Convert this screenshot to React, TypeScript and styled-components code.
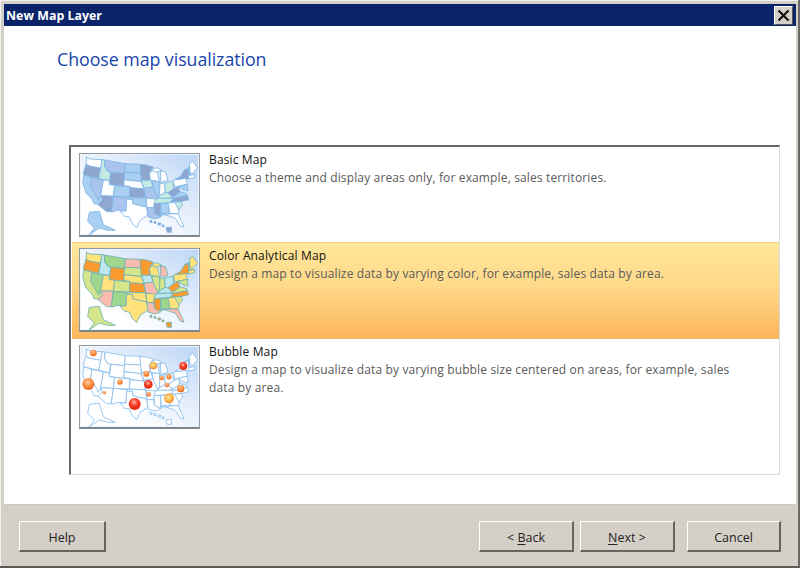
import React from "react";
import styled, { createGlobalStyle } from "styled-components";

const Global = createGlobalStyle`
  html, body { margin: 0; padding: 0; background: #d4d0c8; }
  #root { width: 800px; height: 568px; overflow: hidden; }
`;

const Win = styled.div`
  box-sizing: border-box;
  width: 800px;
  height: 568px;
  display: flex;
  flex-direction: column;
  background: #d4d0c8;
  padding: 4px 2px 0 4px;
  border-right: 2px solid #6a6a68;
  border-bottom: 2px solid #5a5a58;
  box-shadow: inset 1px 1px 0 #f4f2ee;
  font-family: "Open Sans", "Noto Sans", sans-serif;
`;

const TitleBar = styled.div`
  height: 22px;
  flex: none;
  background: #0a246a;
  display: flex;
  align-items: center;
  justify-content: space-between;
  padding: 0 3px 0 2px;
  color: #fff;
  font: bold 12.4px "Open Sans", sans-serif;
`;

const CloseBtn = styled.div`
  box-sizing: border-box;
  width: 19px;
  height: 19px;
  background: #d4d0c8;
  border: 1px solid;
  border-color: #fff #555 #555 #fff;
  display: flex;
  align-items: center;
  justify-content: center;
`;

const Body = styled.div`
  height: 478px;
  flex: none;
  background: #fff;
  box-sizing: border-box;
  padding: 21px 16px 0 53px;
`;

const Heading = styled.div`
  color: #1a45ad;
  font-family: "Open Sans", sans-serif;
  font-size: 17.8px;
  line-height: 24px;
  height: 24px;
  letter-spacing: -0.05px;
  margin-bottom: 74px;
`;

const ListBox = styled.div`
  box-sizing: border-box;
  width: 711px;
  height: 330px;
  margin-left: 12px;
  border-style: solid;
  border-width: 2px 1px 1px 2px;
  border-color: #666 #dcdad4 #dcdad4 #666;
  background: #fff;
  display: flex;
  flex-direction: column;
`;

const Row = styled.div<{ $selected?: boolean; $h: number }>`
  box-sizing: border-box;
  height: ${(p) => p.$h}px;
  flex: none;
  display: flex;
  align-items: flex-start;
  gap: 9px;
  padding: 6px 8px 0 8px;
  ${(p) =>
    p.$selected
      ? `background: linear-gradient(#ffe79a, #ffd98a 45%, #fdb65c);
         border-top: 1px solid #f5c67e;
         border-bottom: 1px solid #f5b868;
         margin-left: 1px;
         padding-left: 7px;
         padding-top: 5px;`
      : ""}
`;

const Thumb = styled.div`
  box-sizing: border-box;
  width: 121px;
  height: 84px;
  flex: none;
  border: 1px solid #8f9aa6;
  border-bottom: 2px solid #7d8792;
  background: linear-gradient(35deg, #ffffff 25%, #e4eefc 60%, #bcd5f6);
  box-shadow: inset 0 0 0 1px #eef3fa;
  svg { display: block; width: 100%; height: 100%; }
`;

const RowText = styled.div<{ $selected?: boolean }>`
  flex: 1;
  font-size: 12px;
  line-height: 18px;
  letter-spacing: 0.14px;
  margin-top: ${(p) => (p.$selected ? "-1px" : "-2px")};
`;

const RowTitle = styled.div`
  color: #111;
`;

const RowDesc = styled.div`
  color: #5a5a5a;
  width: 530px;
`;

const Footer = styled.div`
  flex: 1;
  display: flex;
  align-items: flex-start;
  padding: 16px 15px 0 15px;
  box-sizing: border-box;
  border-top: 1px solid #c9c6be;
`;

const Btn = styled.div<{ $w: number; $ml?: number }>`
  box-sizing: border-box;
  width: ${(p) => p.$w}px;
  height: 31px;
  margin-left: ${(p) => p.$ml ?? 0}px;
  padding-top: 2px;
  background: #d4d0c8;
  border-style: solid;
  border-width: 1px 2px 2px 1px;
  border-color: #fff #66645f #66645f #fff;
  display: flex;
  align-items: center;
  justify-content: center;
  font: 12.5px "Open Sans", sans-serif;
  color: #222;
  u { text-underline-offset: 2px; }
`;

const Spacer = styled.div`
  flex: 1;
`;

type Fill = Record<string, string>;

const STATES: Record<string, string> = {
  WA: "62,42 72,48 108,50 104,76 72,70 60,64",
  OR: "60,64 72,70 104,76 98,106 54,96 52,90",
  CA: "54,96 78,103 74,130 110,170 104,184 84,182 78,168 60,150 50,118",
  NV: "78,103 112,111 104,158 98,172 74,130",
  ID: "108,50 116,51 116,70 124,84 134,88 130,113 98,106 104,76",
  MT: "116,51 178,62 176,92 135,88 124,84 116,70",
  WY: "135,88 176,92 174,130 130,125",
  UT: "112,111 130,113 130,125 146,127 142,160 104,158",
  AZ: "104,158 142,160 136,206 122,206 96,185 110,170",
  CO: "146,127 192,132 190,162 142,160",
  NM: "142,160 182,164 180,204 150,202 146,206 136,206",
  ND: "178,62 222,64 226,90 176,88",
  SD: "176,88 226,90 226,116 174,110",
  NE: "174,110 226,116 234,138 192,134 192,130 174,128",
  KS: "192,134 234,138 238,164 190,162",
  OK: "182,164 238,164 242,192 214,186 200,182 200,170 182,168",
  TX: "182,168 200,170 200,182 214,186 242,192 246,216 222,232 212,254 198,240 190,222 176,220 162,204 180,204",
  MN: "222,64 240,66 262,72 250,90 252,112 226,112",
  IA: "226,112 254,112 262,132 234,136",
  MO: "234,136 262,132 276,164 270,170 240,166",
  AR: "240,166 270,168 262,194 243,194",
  LA: "243,194 262,194 266,210 284,222 268,228 246,222",
  WI: "250,90 262,82 276,92 280,116 254,112",
  IL: "258,114 280,116 284,148 276,164 262,136",
  IN: "282,122 296,120 298,148 280,158",
  MI: "284,84 298,86 306,112 284,118",
  UP: "256,80 272,74 288,82 270,88",
  OH: "296,120 322,114 322,138 306,150 298,148",
  KY: "276,166 280,158 298,148 306,150 314,158 322,162 312,166",
  WV: "322,138 336,130 342,146 322,162 314,158 306,150",
  VA: "312,166 322,162 342,146 362,152 364,158 324,166",
  TN: "268,170 276,166 312,166 324,166 312,178 264,182",
  NC: "312,178 324,166 364,158 368,170 344,176 314,178",
  SC: "314,178 344,176 350,186 336,204",
  MS: "264,182 284,182 284,220 266,212",
  AL: "284,182 306,180 312,212 290,212 286,220",
  GA: "306,180 326,178 340,204 336,212 312,212",
  FL: "286,214 336,212 354,252 344,250 328,226 306,218",
  PA: "322,114 326,110 360,106 364,124 326,132",
  MD: "336,130 364,124 366,144 352,140",
  NY: "326,110 344,100 356,80 368,78 370,108 360,106",
  VT: "356,80 368,74 368,94 368,78",
  NH: "368,74 372,86 378,92 370,98",
  ME: "370,62 380,55 395,75 378,92 372,86",
  MA: "368,98 386,94 386,104 368,108",
  AK: "70,208 100,205 112,245 148,262 125,262 100,255 68,277 85,255 65,235",
  HI1: "252,232 258,232 258,238 252,238",
  HI2: "264,236 270,236 270,241 264,241",
  HI3: "276,240 284,240 284,246 276,246",
  HI4: "288,246 294,246 294,251 288,251",
  HI5: "300,254 316,252 316,268 304,268",
};

const s = "#8fa6cf", l = "#a9d0f2", p = "#aac4ee", w = "#ffffff", m = "#c3ebe2";
const BASIC: Fill = {
  WA: w, OR: s, CA: l, NV: p, ID: m, MT: p, WY: s, UT: w, AZ: s, CO: l, NM: p, ND: l, SD: l, NE: w, KS: s, OK: l, TX: w,
  MN: s, IA: m, MO: p, AR: w, LA: p, WI: w, IL: l, IN: w, MI: w, UP: w, OH: m, KY: m, TN: m, MS: s, AL: l, GA: w, FL: w,
  SC: m, NC: s, VA: l, WV: s, PA: w, MD: l, NY: s, VT: w, ME: w, NH: l, MA: w, AK: l, HI1: s, HI2: s, HI3: s, HI4: s, HI5: s,
};

const y = "#ffe27a", o = "#fb9a2e", g = "#9ed68e", k = "#fbbcb0", c = "#d5e68a", b = "#bde6ee";
const COLOR: Fill = {
  WA: y, OR: o, CA: c, NV: g, ID: b, MT: g, WY: o, UT: y, AZ: k, CO: c, NM: g, ND: k, SD: c, NE: y, KS: o, OK: y, TX: y,
  MN: o, IA: b, MO: k, AR: y, LA: k, WI: y, IL: c, IN: c, MI: k, UP: y, OH: b, KY: b, TN: b, MS: o, AL: g, GA: y, FL: k,
  SC: c, NC: o, VA: c, WV: o, PA: y, MD: c, NY: o, VT: c, ME: y, NH: y, MA: y, AK: c, HI1: o, HI2: o, HI3: o, HI4: o, HI5: o,
};

const BUBBLES: [number, number, number, string][] = [
  [82, 54, 10, "o"], [262, 92, 11, "y"], [352, 93, 12, "r"], [241, 116, 9, "o"], [287, 129, 7, "o"],
  [309, 125, 8, "o"], [67, 147, 18, "o"], [162, 141, 8, "o"], [247, 148, 13, "r"], [303, 150, 7, "o"],
  [344, 161, 11, "o"], [115, 173, 5, "o"], [248, 178, 7, "o"], [309, 190, 15, "y"], [206, 207, 18, "r"],
];

function UsMap({ fill, stroke, bubbles }: { fill?: Fill; stroke: string; bubbles?: boolean }) {
  return (
    <svg viewBox="42 33 357 243" preserveAspectRatio="none">
      <defs>
        <radialGradient id="br" cx="45%" cy="35%" r="70%">
          <stop offset="0" stopColor="#ffb0a0" />
          <stop offset="0.5" stopColor="#f4341c" />
          <stop offset="1" stopColor="#d92a10" />
        </radialGradient>
        <radialGradient id="bo" cx="45%" cy="35%" r="70%">
          <stop offset="0" stopColor="#ffc9a0" />
          <stop offset="0.55" stopColor="#f98a3a" />
          <stop offset="1" stopColor="#ec5a22" />
        </radialGradient>
        <radialGradient id="by" cx="45%" cy="40%" r="70%">
          <stop offset="0" stopColor="#ffe6a0" />
          <stop offset="0.55" stopColor="#fbb040" />
          <stop offset="1" stopColor="#ee6a22" />
        </radialGradient>
      </defs>
      {Object.entries(STATES).map(([id, pts]) => (
        <polygon
          key={id}
          points={pts}
          fill={fill ? fill[id] : "#ffffff"}
          stroke={stroke}
          strokeWidth={2.6}
          strokeLinejoin="round"
        />
      ))}
      {bubbles &&
        BUBBLES.map(([cx, cy, r, t], i) => (
          <circle key={i} cx={cx} cy={cy} r={r} fill={`url(#b${t})`} />
        ))}
    </svg>
  );
}

export default function App() {
  return (
    <>
      <Global />
      <Win>
        <TitleBar>
          <span>New Map Layer</span>
          <CloseBtn>
            <svg width="13" height="13" viewBox="0 0 13 13">
              <path d="M1.5 1.5 L11.5 11.5 M11.5 1.5 L1.5 11.5" stroke="#111" strokeWidth="2.2" />
            </svg>
          </CloseBtn>
        </TitleBar>
        <Body>
          <Heading>Choose map visualization</Heading>
          <ListBox>
            <Row $h={95}>
              <Thumb>
                <UsMap fill={BASIC} stroke="#7fb6e6" />
              </Thumb>
              <RowText>
                <RowTitle>Basic Map</RowTitle>
                <RowDesc>Choose a theme and display areas only, for example, sales territories.</RowDesc>
              </RowText>
            </Row>
            <Row $h={97} $selected>
              <Thumb>
                <UsMap fill={COLOR} stroke="#6fb4b4" />
              </Thumb>
              <RowText $selected>
                <RowTitle>Color Analytical Map</RowTitle>
                <RowDesc>Design a map to visualize data by varying color, for example, sales data by area.</RowDesc>
              </RowText>
            </Row>
            <Row $h={96}>
              <Thumb>
                <UsMap stroke="#8cc0ec" bubbles />
              </Thumb>
              <RowText>
                <RowTitle>Bubble Map</RowTitle>
                <RowDesc>
                  Design a map to visualize data by varying bubble size centered on areas, for example, sales data by area.
                </RowDesc>
              </RowText>
            </Row>
          </ListBox>
        </Body>
        <Footer>
          <Btn $w={87}>Help</Btn>
          <Spacer />
          <Btn $w={95}>
            &lt;&nbsp;<u>B</u>ack
          </Btn>
          <Btn $w={95} $ml={6}>
            <u>N</u>ext&nbsp;&gt;
          </Btn>
          <Btn $w={94} $ml={12}>
            Cancel
          </Btn>
        </Footer>
      </Win>
    </>
  );
}
